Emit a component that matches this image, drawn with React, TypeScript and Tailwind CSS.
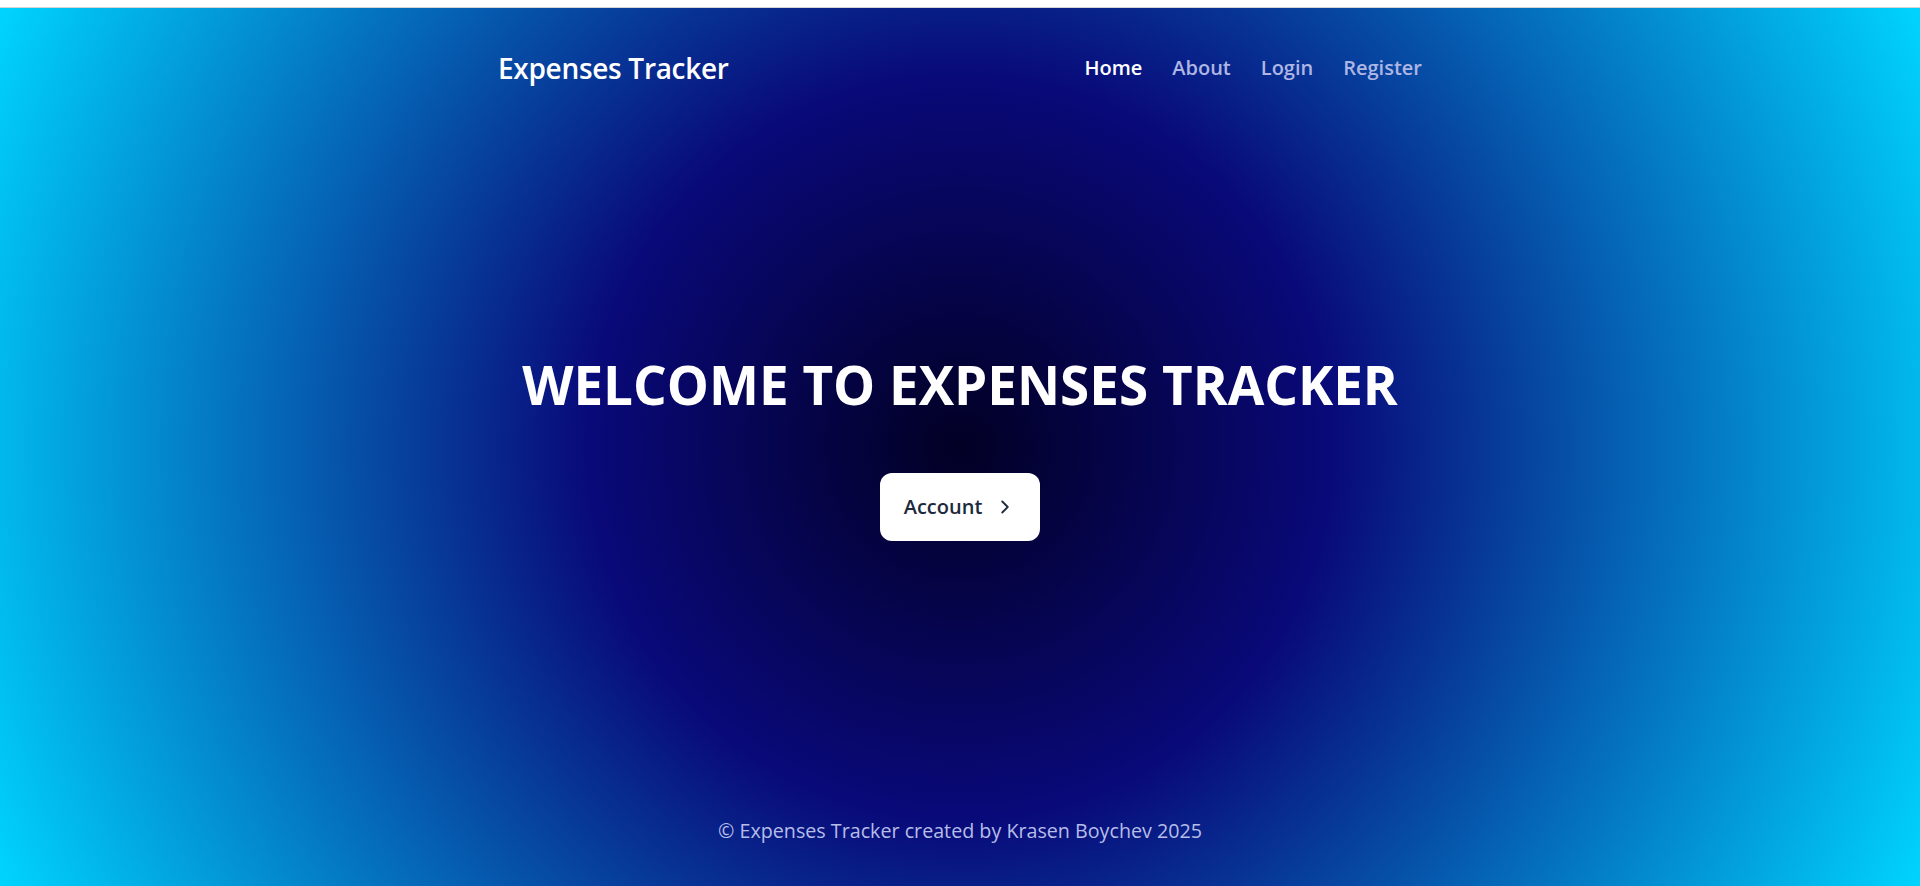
import { ChevronRight } from "lucide-react";

const navLinks = ["Home", "About", "Login", "Register"];

export default function App() {
  return (
    <div className="h-screen flex flex-col font-['Segoe_UI','Open_Sans',sans-serif]">
      <div className="h-[8px] bg-white border-b border-[#d4d4d4]" />

      <div className="flex-1 flex flex-col bg-[radial-gradient(circle,rgba(2,0,36,1)_0%,rgba(9,9,121,1)_35%,rgba(0,212,255,1)_100%)]">
        <header className="h-[120px] w-full max-w-5xl mx-auto px-[50px] flex items-center justify-between">
          <a className="text-[28px] font-semibold text-white tracking-[-0.3px]">Expenses Tracker</a>
          <nav className="flex items-center gap-[30px] text-xl font-semibold">
            {navLinks.map((link, i) => (
              <a
                key={link}
                className={i === 0 ? "text-white cursor-pointer" : "text-[#aeb6e4] cursor-pointer hover:text-white"}
              >
                {link}
              </a>
            ))}
          </nav>
        </header>

        <main className="flex-1 pb-[6px] flex flex-col items-center justify-center">
          <h1 className="text-[53px] leading-none font-bold text-white">
            WELCOME TO EXPENSES TRACKER
          </h1>
          <button className="mt-[62px] h-[68px] px-6 flex items-center gap-3 bg-white rounded-xl text-xl font-semibold text-slate-800">
            Account
            <ChevronRight size={22} strokeWidth={2} />
          </button>
        </main>

        <footer className="h-[110px] flex items-center justify-center text-[19.7px] text-[#b6bde8]">
          © Expenses Tracker created by Krasen Boychev 2025
        </footer>
      </div>
    </div>
  );
}
